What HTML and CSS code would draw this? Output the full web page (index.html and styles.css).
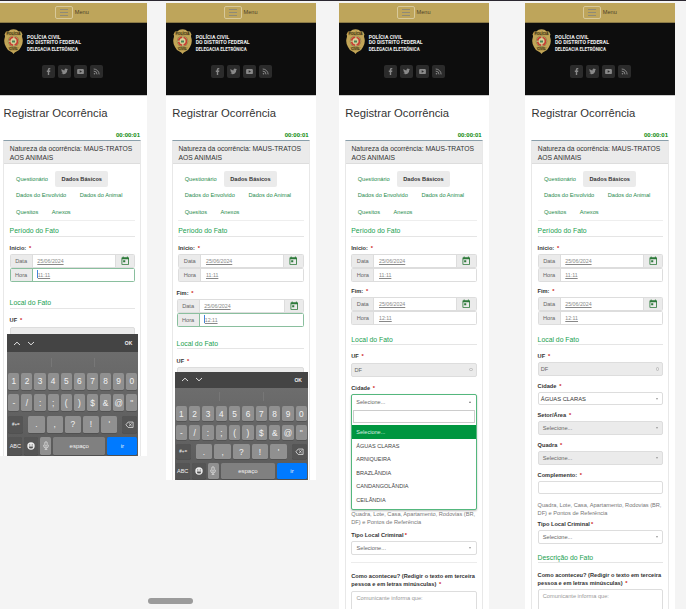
FILE: index.html
```html
<!DOCTYPE html>
<html lang="pt-BR">
<head>
<meta charset="utf-8">
<title>Registrar Ocorrência</title>
<link rel="stylesheet" href="styles.css">
</head>
<body>
<svg class="sprite" aria-hidden="true">
  <symbol id="badge" viewBox="0 0 38 50">
    <path d="M4 5 Q10 6 12 2 Q19 -1 26 2 Q28 6 34 5 L37 11 Q35 14 37 19 Q39 28 34 36 Q31 43 25 45 Q21 46 19 50 Q17 46 13 45 Q7 43 4 36 Q-1 28 1 19 Q3 14 1 11 Z" fill="#c2a557"/>
    <path d="M5 6 H33 V12.500 H5 Z M8 36 H30 L26 43 H12 Z" fill="#a78b43"/>
    <circle cx="19" cy="24.500" r="11.500" fill="#8f8348"/>
    <circle cx="19" cy="24.500" r="10" fill="#c9b77e"/>
    <circle cx="19" cy="24.500" r="8" fill="none" stroke="#c93c31" stroke-width="3" stroke-dasharray="10 3"/>
    <path d="M14 21 L19 18 L24 21 V27 L19 31 L14 27 Z" fill="#d9cf9b"/>
    <path d="M16 23 H22 V27 H16 Z" fill="#4c8453"/>
    <text x="19" y="11.800" class="badge-text">POLÍCIA</text>
    <text x="19" y="42.300" class="badge-text">CIVIL</text>
  </symbol>
  <symbol id="facebook" viewBox="0 0 13 13"><path d="M5.800 10V6.900H4.800V5.500h1V4.700c0-1.200.6-1.800 1.700-1.800h.8v1.300h-.5c-.5 0-.6.2-.6.6v.7h1.100L8.200 6.900H7.200V10z"/></symbol>
  <symbol id="twitter" viewBox="0 0 13 13"><path d="M10 4.300c-.3.100-.5.200-.8.200.300-.2.500-.4.600-.8-.3.200-.6.300-.9.400a1.400 1.400 0 0 0-2.400 1.300C5.300 5.300 4.300 4.800 3.600 3.900c-.4.700-.2 1.500.4 1.900-.2 0-.4-.1-.6-.2 0 .7.500 1.300 1.100 1.400h-.6c.2.600.7 1 1.300 1-.6.500-1.300.7-2.100.6 2.700 1.700 6.200.1 6.200-3.600.3-.2.500-.4.700-.7z"/></symbol>
  <symbol id="youtube" viewBox="0 0 13 13"><path fill-rule="evenodd" d="M4.300 3.900h4.400q1.200 0 1.200 1.200v2.800q0 1.200-1.200 1.200H4.300q-1.200 0-1.200-1.200V5.100q0-1.200 1.200-1.200zM5.700 5.200v2.600L8 6.500z"/></symbol>
  <symbol id="rss" viewBox="0 0 13 13"><circle cx="4.500" cy="8.700" r=".8"/><path d="M3.700 6.100a3.300 3.300 0 0 1 3.300 3.300M3.700 4a5.400 5.400 0 0 1 5.400 5.400" fill="none" stroke="currentColor" stroke-width="1"/></symbol>
  <symbol id="calendar" viewBox="0 0 24 24"><path d="M19 3h-1V1h-2v2H8V1H6v2H5a2 2 0 0 0-2 2v14a2 2 0 0 0 2 2h14a2 2 0 0 0 2-2V5a2 2 0 0 0-2-2zm0 16H5V8h14zM7 10h5v5H7z"/></symbol>
  <symbol id="up" viewBox="0 0 8 5"><path d="M1 4 4 1.200 7 4" fill="none" stroke="currentColor" stroke-width=".9"/></symbol>
  <symbol id="down" viewBox="0 0 8 5"><path d="M1 1 4 3.800 7 1" fill="none" stroke="currentColor" stroke-width=".9"/></symbol>
  <symbol id="erase" viewBox="0 0 10 8"><path d="M3.500 1H9v6H3.500L1 4zM4.600 2.600l2.800 2.800M7.400 2.600 4.600 5.400" fill="none" stroke="currentColor" stroke-width=".8"/></symbol>
  <symbol id="smile" viewBox="0 0 8 8"><circle cx="4" cy="4" r="3.700"/><path d="M1.800 4.400h4.400a2.200 2.200 0 0 1-4.400 0z" fill="#555"/><circle cx="2.800" cy="2.900" r=".55" fill="#555"/><circle cx="5.200" cy="2.900" r=".55" fill="#555"/></symbol>
  <symbol id="mic" viewBox="0 0 8 10"><rect x="2.700" y=".8" width="2.600" height="5" rx="1.300" fill="none" stroke="currentColor" stroke-width=".7"/><path d="M1.300 4.300v.7a2.700 2.700 0 0 0 5.400 0v-.7M4 7.700v1.500M2.500 9.300h3" fill="none" stroke="currentColor" stroke-width=".7"/></symbol>
</svg>

<main class="board">
  <section class="phone phone-1">
    <nav class="bar"><span class="burger"><i></i><i></i><i></i></span>Menu</nav>
    <header class="brand">
      <div class="brand-row"><svg class="badge"><use href="#badge"/></svg><div class="brand-name"><b>POLÍCIA CIVIL</b><b>DO DISTRITO FEDERAL</b><small>DELEGACIA ELETRÔNICA</small></div></div>
      <div class="social"><svg><use href="#facebook"/></svg><svg><use href="#twitter"/></svg><svg><use href="#youtube"/></svg><svg><use href="#rss"/></svg></div>
    </header>
    <h1>Registrar Ocorrência</h1>
    <div class="timer">00:00:01</div>
    <div class="panel">
      <div class="panel-head">Natureza da ocorrência: MAUS-TRATOS<br>AOS ANIMAIS</div>
      <div class="tabs"><a>Questionário</a><a class="active">Dados Básicos</a><a>Dados do Envolvido</a><a>Dados do Animal</a><a>Quesitos</a><a>Anexos</a></div>
      <h2>Período do Fato</h2>
      <label>Início: <em>*</em></label>
      <div class="group"><span>Data</span><u>25/06/2024</u><svg class="cal"><use href="#calendar"/></svg></div>
      <div class="group focus"><span>Hora</span><u>11:11</u></div>
      <h2 class="local">Local do Fato</h2>
      <label>UF <em>*</em></label>
      <div class="field muted"></div>
    </div>
    <div class="keyboard">
      <div class="kb-tools"><svg><use href="#up"/></svg><svg><use href="#down"/></svg><b>OK</b></div>
      <div class="kb-hints"><i></i><i></i><i></i></div>
      <div class="keys"><kbd>1</kbd><kbd>2</kbd><kbd>3</kbd><kbd>4</kbd><kbd>5</kbd><kbd>6</kbd><kbd>7</kbd><kbd>8</kbd><kbd>9</kbd><kbd>0</kbd></div>
      <div class="keys"><kbd>-</kbd><kbd>/</kbd><kbd>:</kbd><kbd>;</kbd><kbd>(</kbd><kbd>)</kbd><kbd>$</kbd><kbd>&amp;</kbd><kbd>@</kbd><kbd>"</kbd></div>
      <div class="keys punct"><kbd class="dark">#+=</kbd><kbd>.</kbd><kbd>,</kbd><kbd>?</kbd><kbd>!</kbd><kbd>'</kbd><kbd class="dark"><svg class="erase"><use href="#erase"/></svg></kbd></div>
      <div class="keys bottom"><kbd class="dark">ABC</kbd><kbd class="dark"><svg class="smile"><use href="#smile"/></svg></kbd><kbd><svg class="mic"><use href="#mic"/></svg></kbd><kbd>espaço</kbd><kbd class="go">ir</kbd></div>
    </div>
  </section>

  <section class="phone phone-2">
    <nav class="bar"><span class="burger"><i></i><i></i><i></i></span>Menu</nav>
    <header class="brand">
      <div class="brand-row"><svg class="badge"><use href="#badge"/></svg><div class="brand-name"><b>POLÍCIA CIVIL</b><b>DO DISTRITO FEDERAL</b><small>DELEGACIA ELETRÔNICA</small></div></div>
      <div class="social"><svg><use href="#facebook"/></svg><svg><use href="#twitter"/></svg><svg><use href="#youtube"/></svg><svg><use href="#rss"/></svg></div>
    </header>
    <h1>Registrar Ocorrência</h1>
    <div class="timer">00:00:01</div>
    <div class="panel">
      <div class="panel-head">Natureza da ocorrência: MAUS-TRATOS<br>AOS ANIMAIS</div>
      <div class="tabs"><a>Questionário</a><a class="active">Dados Básicos</a><a>Dados do Envolvido</a><a>Dados do Animal</a><a>Quesitos</a><a>Anexos</a></div>
      <h2>Período do Fato</h2>
      <label>Início: <em>*</em></label>
      <div class="group"><span>Data</span><u>25/06/2024</u><svg class="cal"><use href="#calendar"/></svg></div>
      <div class="group"><span>Hora</span><u>11:11</u></div>
      <div class="shifted">
        <label class="end">Fim: <em>*</em></label>
        <div class="group"><span>Data</span><u>25/06/2024</u><svg class="cal"><use href="#calendar"/></svg></div>
        <div class="group focus"><span>Hora</span><u>12:11</u></div>
        <h2 class="local">Local do Fato</h2>
        <label>UF <em>*</em></label>
        <div class="field muted"></div>
      </div>
    </div>
    <div class="keyboard">
      <div class="kb-tools"><svg><use href="#up"/></svg><svg><use href="#down"/></svg><b>OK</b></div>
      <div class="kb-hints"><i></i><i></i><i></i></div>
      <div class="keys"><kbd>1</kbd><kbd>2</kbd><kbd>3</kbd><kbd>4</kbd><kbd>5</kbd><kbd>6</kbd><kbd>7</kbd><kbd>8</kbd><kbd>9</kbd><kbd>0</kbd></div>
      <div class="keys"><kbd>-</kbd><kbd>/</kbd><kbd>:</kbd><kbd>;</kbd><kbd>(</kbd><kbd>)</kbd><kbd>$</kbd><kbd>&amp;</kbd><kbd>@</kbd><kbd>"</kbd></div>
      <div class="keys punct"><kbd class="dark">#+=</kbd><kbd>.</kbd><kbd>,</kbd><kbd>?</kbd><kbd>!</kbd><kbd>'</kbd><kbd class="dark"><svg class="erase"><use href="#erase"/></svg></kbd></div>
      <div class="keys bottom"><kbd class="dark">ABC</kbd><kbd class="dark"><svg class="smile"><use href="#smile"/></svg></kbd><kbd><svg class="mic"><use href="#mic"/></svg></kbd><kbd>espaço</kbd><kbd class="go">ir</kbd></div>
    </div>
  </section>

  <section class="phone phone-3">
    <nav class="bar"><span class="burger"><i></i><i></i><i></i></span>Menu</nav>
    <header class="brand">
      <div class="brand-row"><svg class="badge"><use href="#badge"/></svg><div class="brand-name"><b>POLÍCIA CIVIL</b><b>DO DISTRITO FEDERAL</b><small>DELEGACIA ELETRÔNICA</small></div></div>
      <div class="social"><svg><use href="#facebook"/></svg><svg><use href="#twitter"/></svg><svg><use href="#youtube"/></svg><svg><use href="#rss"/></svg></div>
    </header>
    <h1>Registrar Ocorrência</h1>
    <div class="timer">00:00:01</div>
    <div class="panel">
      <div class="panel-head">Natureza da ocorrência: MAUS-TRATOS<br>AOS ANIMAIS</div>
      <div class="tabs"><a>Questionário</a><a class="active">Dados Básicos</a><a>Dados do Envolvido</a><a>Dados do Animal</a><a>Quesitos</a><a>Anexos</a></div>
      <h2>Período do Fato</h2>
      <label>Início: <em>*</em></label>
      <div class="group"><span>Data</span><u>25/06/2024</u><svg class="cal"><use href="#calendar"/></svg></div>
      <div class="group"><span>Hora</span><u>11:11</u></div>
      <label class="end">Fim: <em>*</em></label>
      <div class="group"><span>Data</span><u>25/06/2024</u><svg class="cal"><use href="#calendar"/></svg></div>
      <div class="group"><span>Hora</span><u>12:11</u></div>
      <h2 class="local">Local do Fato</h2>
      <label>UF <em>*</em></label>
      <div class="field muted native">DF<span class="updown"></span></div>
      <label class="city">Cidade <em>*</em></label>
      <div class="dropdown">
        <div class="drop-value">Selecione...<span class="caret open"></span></div>
        <div class="drop-search"></div>
        <ul><li class="on">Selecione...</li><li>ÁGUAS CLARAS</li><li>ARNIQUEIRA</li><li>BRAZLÂNDIA</li><li>CANDANGOLÂNDIA</li><li>CEILÂNDIA</li></ul>
      </div>
      <p>Quadra, Lote, Casa, Apartamento, Rodovias (BR,<br>DF) e Pontos de Referência</p>
      <label class="crime">Tipo Local Criminal<em>*</em></label>
      <div class="field select">Selecione...<span class="caret"></span></div>
      <hr>
      <label class="story">Como aconteceu? (Redigir o texto em terceira<br>pessoa e em letras minúsculas) <em>*</em></label>
      <div class="field area">Comunicante informa que:</div>
    </div>
  </section>

  <section class="phone phone-4">
    <nav class="bar"><span class="burger"><i></i><i></i><i></i></span>Menu</nav>
    <header class="brand">
      <div class="brand-row"><svg class="badge"><use href="#badge"/></svg><div class="brand-name"><b>POLÍCIA CIVIL</b><b>DO DISTRITO FEDERAL</b><small>DELEGACIA ELETRÔNICA</small></div></div>
      <div class="social"><svg><use href="#facebook"/></svg><svg><use href="#twitter"/></svg><svg><use href="#youtube"/></svg><svg><use href="#rss"/></svg></div>
    </header>
    <h1>Registrar Ocorrência</h1>
    <div class="timer">00:00:01</div>
    <div class="panel">
      <div class="panel-head">Natureza da ocorrência: MAUS-TRATOS<br>AOS ANIMAIS</div>
      <div class="tabs"><a>Questionário</a><a class="active">Dados Básicos</a><a>Dados do Envolvido</a><a>Dados do Animal</a><a>Quesitos</a><a>Anexos</a></div>
      <h2>Período do Fato</h2>
      <label>Início: <em>*</em></label>
      <div class="group"><span>Data</span><u>25/06/2024</u><svg class="cal"><use href="#calendar"/></svg></div>
      <div class="group"><span>Hora</span><u>11:11</u></div>
      <label class="end">Fim: <em>*</em></label>
      <div class="group"><span>Data</span><u>25/06/2024</u><svg class="cal"><use href="#calendar"/></svg></div>
      <div class="group"><span>Hora</span><u>12:11</u></div>
      <h2 class="local">Local do Fato</h2>
      <label>UF <em>*</em></label>
      <div class="field muted native">DF<span class="updown"></span></div>
      <label class="next">Cidade <em>*</em></label>
      <div class="field native chosen">ÁGUAS CLARAS<span class="caret"></span></div>
      <label class="next">Setor/Área <em>*</em></label>
      <div class="field muted select">Selecione...<span class="caret"></span></div>
      <label class="next">Quadra <em>*</em></label>
      <div class="field muted select">Selecione...<span class="caret"></span></div>
      <label class="next">Complemento: <em>*</em></label>
      <div class="field"></div>
      <p>Quadra, Lote, Casa, Apartamento, Rodovias (BR,<br>DF) e Pontos de Referência</p>
      <label class="crime">Tipo Local Criminal<em>*</em></label>
      <div class="field select">Selecione...<span class="caret"></span></div>
      <h2 class="desc">Descrição do Fato</h2>
      <label class="story">Como aconteceu? (Redigir o texto em terceira<br>pessoa e em letras minúsculas) <em>*</em></label>
      <div class="field area">Comunicante informa que:</div>
    </div>
  </section>
</main>
<div class="scroll-pill"></div>
</body>
</html>
```
FILE: styles.css
```css
* { box-sizing: border-box; }
body {
  margin: 0;
  width: 686px;
  height: 609px;
  overflow: hidden;
  background: #f4f4f4;
  border-top: 1px solid #2b2730;
  font-family: "Liberation Sans", Arial, sans-serif;
  font-size: 5.650px;
  color: #333;
}
.sprite { display: none; }
.board { display: flex; align-items: flex-start; padding-top: 2px; height: 608px; overflow: hidden; }
.phone { flex: none; width: 150px; background: #fff; overflow: hidden; }
.phone-1 { margin-left: -2.700px; height: 453px; }
.phone-2 { margin-left: 18.700px; height: 477px; }
.phone-3 { margin-left: 23px; height: 606px; }
.phone-4 { margin-left: 36.300px; height: 606px; }

.bar {
  display: flex; align-items: center; gap: 1.500px; height: 19.500px; padding-left: 58px;
  background: #bea55b; border-bottom: 1px solid #8b7a47; color: #4d4229; font-size: 5.600px;
}
.burger {
  display: flex; flex-direction: column; justify-content: center; gap: 2px;
  width: 18px; height: 13.500px; padding: 0 4px; border: 1px solid #d8c99a; border-radius: 2px;
}
.burger i { height: 1px; background: #8f8a76; }

.brand { height: 73.500px; padding: 6px 7px 0; background: #0d0d0d; border-bottom: 1px solid #ccc; }
.brand-row { display: flex; height: 25px; }
.badge { width: 19px; height: 25px; }
.badge-text { font-size: 7px; font-weight: bold; text-anchor: middle; fill: #3b3116; }
.brand-name { display: flex; flex-direction: column; padding: 6px 0 0 3.700px; color: #eee; font-family: Roboto, sans-serif; white-space: nowrap; }
.brand-name b { font-size: 5.200px; line-height: 5.500px; font-weight: 700; }
.brand-name small { font-size: 4.450px; line-height: 7.500px; font-weight: 700; }
.social { display: flex; justify-content: center; gap: 3px; margin-top: 11.500px; }
.social svg { width: 13px; height: 13px; border-radius: 2px; background: #2b2b2b; color: #898989; fill: currentColor; }

h1 { margin: 10px 0 0 6.300px; font-size: 11.250px; line-height: 14px; font-weight: 400; white-space: nowrap; }
.timer { margin: 11px 7.300px 1px 0; text-align: right; line-height: 8px; font-size: 6px; font-weight: 700; color: #0a8a0a; }
.panel { margin: 0 6px; border: 1px solid #e8e8e8; border-top: 1.300px solid #8a9fab; height: 600px; }
.panel-head { height: 23px; padding: 2.500px 0 0 5.500px; background: #ebebeb; border-bottom: 1px solid #ddd; font-size: 6.750px; line-height: 9px; white-space: nowrap; }
.tabs { display: flex; flex-wrap: wrap; align-content: flex-start; margin: 7px 5.300px 0; height: 49.500px; border-bottom: 1px solid #eee; }
.tabs a { height: 16.400px; line-height: 16.400px; padding: 0 6.400px; margin-right: .8px; color: #1f8b4d; white-space: nowrap; }
.tabs .active { background: #ebebeb; color: #333; font-weight: 700; border-radius: 2px; }
h2 { margin: 5.500px 5.300px 0; height: 10.500px; border-bottom: 1px solid #e5e5e5; font-size: 6.850px; line-height: 9px; font-weight: 400; color: #18a050; }
label { display: block; margin: 7.200px 5.300px 0; height: 8px; line-height: 8px; font-weight: 700; white-space: nowrap; }
em { color: #c22; font-style: normal; font-weight: 700; margin-left: 1.200px; }
.group { display: flex; height: 14px; margin: 0 5.300px; border: 1px solid #ddd; border-radius: 1.500px; background: #fff; color: #666; line-height: 12.500px; }
label + .group { margin-top: 2px; }
.group span { flex: none; width: 22px; background: #ebebeb; border-right: 1px solid #ddd; text-align: center; }
.group u { flex: 1; padding-left: 4.700px; font-size: 5.250px; color: #888; text-decoration-thickness: .5px; text-underline-offset: 1px; }
.cal { width: 19.500px; height: 12px; padding: 1px 4px; background: #ebebeb; border-left: 1px solid #ddd; fill: #2d7a3a; }
.focus { border-color: #8abf9e; }
.focus span { border-right-color: #8abf9e; }
.focus u::before { content: ""; display: inline-block; width: 1px; height: 8px; margin-right: -.5px; vertical-align: -1.500px; background: #4485dd; }
.field { display: flex; align-items: center; height: 14px; margin: 2.500px 5.300px 0; padding: 0 4.500px 0 4.200px; border: 1px solid #ddd; border-radius: 2px; color: #666; }
.muted { background: #ebebeb; }
.native { padding-left: 2.200px; }
.chosen { color: #333; font-size: 5.800px; }
.caret { margin-left: auto; border: 1.500px solid transparent; border-top: 2px solid #999; border-bottom: 0; }
.caret.open { border-top: 0; border-bottom: 2px solid #777; }
.updown { margin-left: auto; margin-right: -1.500px; width: 3.500px; height: 3.500px; border: .7px solid #bbb; border-radius: 1.500px; }
p { margin: 6px 0 0 5.300px; font-size: 5.650px; line-height: 8.200px; color: #777; white-space: nowrap; }
hr { margin: 7px 5.300px 0; border: 0; height: 1px; background: #ececec; }
label.story { height: 16.500px; line-height: 8.200px; margin-right: 0; }
.area { height: 30px; align-items: flex-start; padding-top: 3px; color: #999; }

/* first phone */
.phone-1 h2.local { margin-top: 16.500px; }
.phone-1 label + .field { margin-top: 3px; }
.phone-1 .keyboard { left: 7.300px; top: 334px; width: 131px; height: 122px; }

/* second phone */
.shifted { margin: 0 -.3px 0 -1.700px; }
.phone-2 label.end { margin-top: 7px; }
.phone-2 h2.local { margin-top: 12.500px; height: 10px; }
.phone-2 .shifted h2 + label { margin-top: 8px; }
.phone-2 .shifted .field { margin-top: 1.500px; }
.phone-2 .keyboard { left: 174.700px; top: 372px; width: 133.300px; height: 108px; }

/* third and fourth phones */
.phone-3 label.end, .phone-4 label.end { margin-top: 5.500px; }
.phone-3 h2.local, .phone-4 h2.local { margin-top: 9.500px; height: 10px; }
.phone-3 h2.local + label, .phone-4 h2.local + label { margin-top: 7.500px; }
.phone-3 .city { margin-top: 7px; }
.dropdown { margin: 2px 5.300px 0; height: 116px; border: 1px solid #54b77d; border-radius: 2px; background: #fff; box-shadow: 0 1px 2px #bbb; color: #444; font-size: 5.550px; }
.drop-value { display: flex; align-items: center; height: 14px; padding: 0 4.500px 0 4px; color: #666; }
.drop-search { margin: 1.500px 1px 2.300px; height: 12.500px; border: 1px solid #ccc; }
ul { list-style: none; margin: 0; padding: 0; }
li { height: 13.600px; line-height: 14.200px; padding-left: 4px; }
li.on { background: #009640; color: #d6efe0; }
.phone-3 p { margin-top: 0; }
.phone-3 .crime { margin-top: 4.500px; }
.phone-3 .story { margin-top: 8.800px; }
.phone-4 .field { height: 13.600px; margin-top: 2px; }
.phone-4 .next { margin-top: 6px; }
.phone-4 p { margin-top: 6.500px; }
.phone-4 .crime { margin-top: 3.200px; }
.phone-4 h2.desc { margin-top: 9px; height: 10px; }
.phone-4 .story { margin-top: 8px; }
.phone-4 .area { height: 30px; }

/* on-screen keyboard, lies over the form */
.keyboard {
  position: absolute; display: flex; flex-direction: column; gap: 4.500px; padding: 0 1px 1.500px;
  background: linear-gradient(#707070, #5a5a5a); color: #f2f2f2;
}
.phone-2 .keyboard { gap: 4px; }
.kb-tools { display: flex; align-items: center; gap: 6px; height: 18px; margin: 0 -1px; padding: 0 6px; background: #444; font-size: 5px; }
.kb-tools svg { width: 8px; height: 5px; }
.kb-tools b { margin-left: auto; }
.kb-hints { display: flex; height: 11.500px; align-items: center; }
.kb-hints i { flex: 1; height: 9px; border-right: 1px solid #777; }
.kb-hints i:last-child { border: 0; }
.phone-2 .kb-tools { height: 15.500px; }
.phone-2 .kb-hints { height: 10.500px; }
.keys { flex: 1; display: grid; grid-template-columns: repeat(10, 1fr); gap: 2px; min-height: 0; }
.keys.punct { display: flex; }
.punct kbd { flex: 1; }
.punct kbd.dark { flex: none; width: 15px; font-size: 4.500px; }
.punct kbd:first-child { margin-right: 3px; }
.punct kbd:last-child { margin-left: 3px; }
.keys.bottom { grid-template-columns: 14px 14px 11px 1fr 30px; }
kbd { display: flex; align-items: center; justify-content: center; background: #909090; border-radius: 1.500px; font-family: inherit; font-size: 8.300px; box-shadow: 0 .5px #444; }
.bottom kbd, kbd.dark { font-size: 5.500px; }
kbd.dark { background: #555; }
.bottom kbd:nth-child(4) { background: #808080; font-size: 6px; }
.bottom kbd.go { background: #007aff; font-size: 6px; }
.smile { width: 8px; height: 8px; fill: #eee; }
.erase { width: 9px; height: 7.500px; }
.mic { width: 8px; height: 9px; }

.scroll-pill { position: absolute; left: 148px; top: 598px; width: 45px; height: 6px; border-radius: 3px; background: #9b9b9b; }
```
